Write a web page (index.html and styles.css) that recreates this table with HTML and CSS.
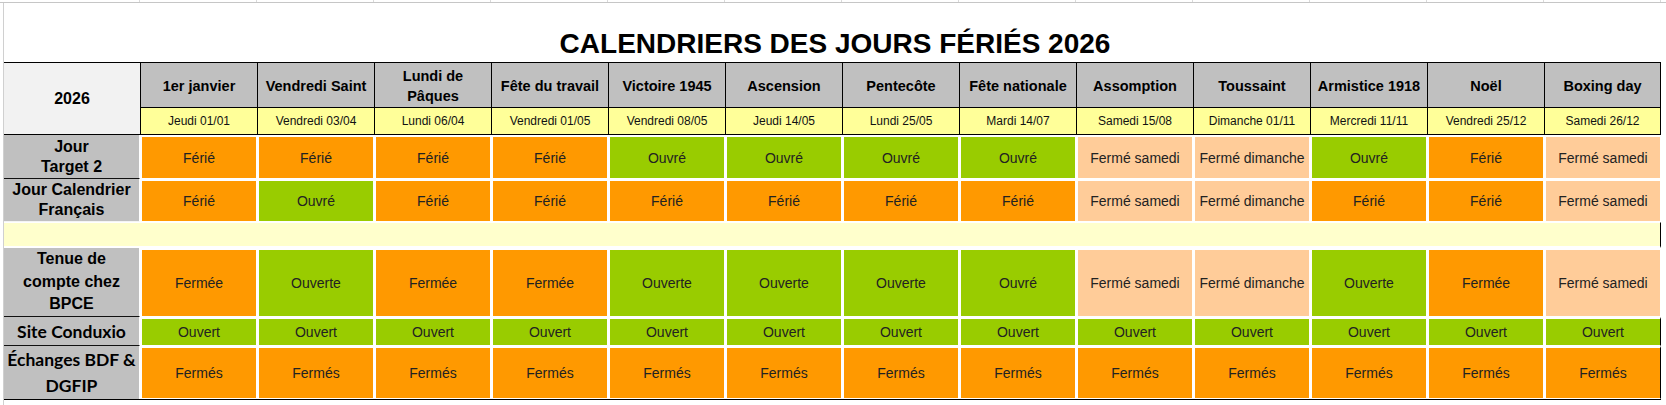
FILE: index.html
```html
<!DOCTYPE html>
<html lang="fr">
<head>
<meta charset="utf-8">
<title>Calendriers des jours fériés 2026</title>
<link rel="stylesheet" href="styles.css">
</head>
<body>
<div class="topstrip">
  <span></span><span></span><span></span><span></span><span></span><span></span><span></span><span></span><span></span><span></span><span></span><span></span><span></span><span></span>
</div>
<div class="sheet">
  <div class="title"><h1>CALENDRIERS DES JOURS FÉRIÉS 2026</h1></div>
  <div class="grid">
    <div class="year">2026</div>
    <div class="hd">1er janvier</div>
    <div class="hd">Vendredi Saint</div>
    <div class="hd">Lundi de<br>Pâques</div>
    <div class="hd">Fête du travail</div>
    <div class="hd">Victoire 1945</div>
    <div class="hd">Ascension</div>
    <div class="hd">Pentecôte</div>
    <div class="hd">Fête nationale</div>
    <div class="hd">Assomption</div>
    <div class="hd">Toussaint</div>
    <div class="hd">Armistice 1918</div>
    <div class="hd">Noël</div>
    <div class="hd end">Boxing day</div>

    <div class="dt">Jeudi 01/01</div>
    <div class="dt">Vendredi 03/04</div>
    <div class="dt">Lundi 06/04</div>
    <div class="dt">Vendredi 01/05</div>
    <div class="dt">Vendredi 08/05</div>
    <div class="dt">Jeudi 14/05</div>
    <div class="dt">Lundi 25/05</div>
    <div class="dt">Mardi 14/07</div>
    <div class="dt">Samedi 15/08</div>
    <div class="dt">Dimanche 01/11</div>
    <div class="dt">Mercredi 11/11</div>
    <div class="dt">Vendredi 25/12</div>
    <div class="dt end">Samedi 26/12</div>

    <div class="lbl lh20">Jour<br>Target 2</div>
    <div class="c o">Férié</div>
    <div class="c o">Férié</div>
    <div class="c o">Férié</div>
    <div class="c o">Férié</div>
    <div class="c g">Ouvré</div>
    <div class="c g">Ouvré</div>
    <div class="c g">Ouvré</div>
    <div class="c g">Ouvré</div>
    <div class="c p">Fermé samedi</div>
    <div class="c p">Fermé dimanche</div>
    <div class="c g">Ouvré</div>
    <div class="c o">Férié</div>
    <div class="c p">Fermé samedi</div>

    <div class="lbl lh20 soft">Jour Calendrier<br>Français</div>
    <div class="c o">Férié</div>
    <div class="c g">Ouvré</div>
    <div class="c o">Férié</div>
    <div class="c o">Férié</div>
    <div class="c o">Férié</div>
    <div class="c o">Férié</div>
    <div class="c o">Férié</div>
    <div class="c o">Férié</div>
    <div class="c p">Fermé samedi</div>
    <div class="c p">Fermé dimanche</div>
    <div class="c o">Férié</div>
    <div class="c o">Férié</div>
    <div class="c p">Fermé samedi</div>

    <div class="blank"></div>

    <div class="lbl lh22">Tenue de<br>compte chez<br>BPCE</div>
    <div class="c o">Fermée</div>
    <div class="c g">Ouverte</div>
    <div class="c o">Fermée</div>
    <div class="c o">Fermée</div>
    <div class="c g">Ouverte</div>
    <div class="c g">Ouverte</div>
    <div class="c g">Ouverte</div>
    <div class="c g">Ouvré</div>
    <div class="c p">Fermé samedi</div>
    <div class="c p">Fermé dimanche</div>
    <div class="c g">Ouverte</div>
    <div class="c o">Fermée</div>
    <div class="c p">Fermé samedi</div>

    <div class="lbl hum">Site Conduxio</div>
    <div class="c g">Ouvert</div>
    <div class="c g">Ouvert</div>
    <div class="c g">Ouvert</div>
    <div class="c g">Ouvert</div>
    <div class="c g">Ouvert</div>
    <div class="c g">Ouvert</div>
    <div class="c g">Ouvert</div>
    <div class="c g">Ouvert</div>
    <div class="c g">Ouvert</div>
    <div class="c g">Ouvert</div>
    <div class="c g">Ouvert</div>
    <div class="c g">Ouvert</div>
    <div class="c g end">Ouvert</div>

    <div class="lbl hum lh26 last">Échanges BDF &amp;<br>DGFIP</div>
    <div class="c o">Fermés</div>
    <div class="c o">Fermés</div>
    <div class="c o">Fermés</div>
    <div class="c o">Fermés</div>
    <div class="c o">Fermés</div>
    <div class="c o">Fermés</div>
    <div class="c o">Fermés</div>
    <div class="c o">Fermés</div>
    <div class="c o">Fermés</div>
    <div class="c o">Fermés</div>
    <div class="c o">Fermés</div>
    <div class="c o">Fermés</div>
    <div class="c o end">Fermés</div>
  </div>
</div>
</body>
</html>
```

FILE: styles.css
```css
* { box-sizing: border-box; }

html, body {
  margin: 0;
  padding: 0;
  background: #ffffff;
}

body {
  width: 1666px;
  height: 405px;
  overflow: hidden;
  font-family: "Liberation Sans", Arial, sans-serif;
  color: #1a1a1a;
}

.topstrip {
  display: grid;
  grid-template-columns: 140px repeat(13, 117px);
  height: 3px;
  border-bottom: 1px solid #c6c6c6;
}

.topstrip span {
  border-right: 1px solid #dadada;
}

.sheet {
  margin-left: 3px;
  border-left: 1px solid #d0d0d0;
  height: 402px;
}

.title {
  height: 59px;
  display: flex;
  align-items: flex-end;
  justify-content: center;
  padding-bottom: 4px;
}

.title h1 {
  margin: 0;
  font-size: 28px;
  line-height: 28px;
  font-weight: bold;
  color: #000;
}

.grid {
  display: grid;
  width: 1657px;
  grid-template-columns: 136px repeat(13, 117px);
  grid-template-rows: 45px 27px 44px 43px 26px 69px 29px 53px;
  border-top: 1px solid #000;
  border-bottom: 1px solid #000;
}

.grid > div {
  display: flex;
  align-items: center;
  justify-content: center;
  text-align: center;
}

.year {
  grid-row: span 2;
  background: #f2f2f2;
  border-bottom: 1px solid #000;
  font-weight: bold;
  font-size: 16px;
  color: #000;
}

.hd {
  background: #c0c0c0;
  border-left: 1px solid #000;
  border-bottom: 1px solid #000;
  font-weight: bold;
  font-size: 14.5px;
  line-height: 20px;
  color: #000;
  padding-top: 1px;
}

.dt {
  background: #ffff99;
  border-left: 1px solid #000;
  border-bottom: 1px solid #000;
  font-size: 12px;
  color: #111;
}

.hd.end, .dt.end {
  border-right: 1px solid #000;
}

.lbl {
  background: #c0c0c0;
  border-right: 1px solid #fff;
  border-bottom: 1px solid #111;
  font-weight: bold;
  font-size: 16px;
  color: #000;
}

.lbl.soft {
  border-bottom: 1px solid #f4f4f4;
}

.lbl.last {
  border-bottom: none;
}

.lh20 { line-height: 20px; }
.lh22 { line-height: 22.5px; }
.lh26 { line-height: 26px; }

.hum {
  font-family: Lato, "Liberation Sans", sans-serif;
  font-size: 17.5px;
}

.c {
  border-left: 2px solid #fff;
  border-right: 1px solid #fff;
  border-top: 2px solid #fff;
  border-bottom: 1px solid #fff;
  font-size: 14px;
  color: #222;
}

.c.end {
  border-right: 1px solid #000;
}

.o { background: #ff9900; }
.g { background: #99cc00; }
.p { background: #ffcc99; }

.blank {
  grid-column: 1 / -1;
  background: #ffffcc;
  border-top: 1px solid #fff;
  border-bottom: 2px solid #fff;
  border-right: 1px solid #000;
}
```
